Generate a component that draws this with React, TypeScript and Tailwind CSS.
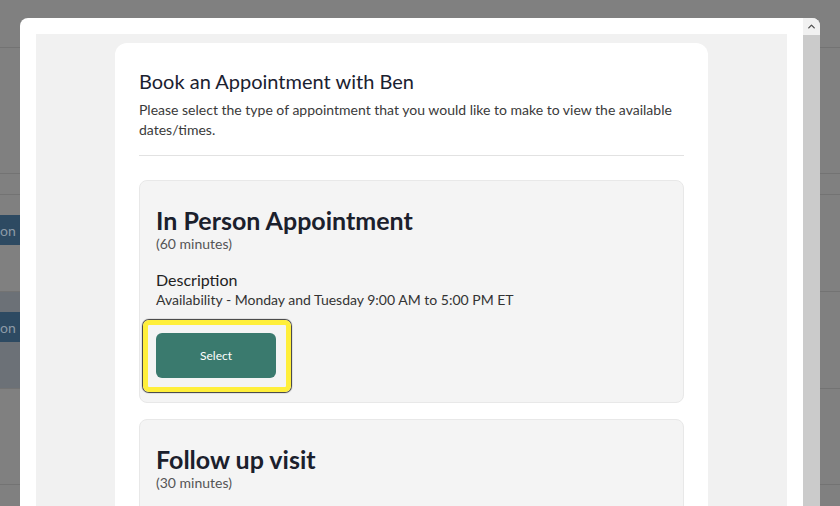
import { ChevronUp } from 'lucide-react'

function BackgroundPage() {
  return (
    <div className="flex h-full w-full flex-col bg-[#808080]">
      <div className="h-[48px] border-b border-[#737373]" />
      <div className="h-[126px] border-b border-[#737373]" />
      <div className="h-[21px] border-b border-[#737373]" />
      <div className="h-[97px] border-b border-[#737373]">
        <div className="mt-[20px] flex h-[30px] w-[60px] items-center bg-[#2d4a62] text-[14px] text-[#8c9aa6]">on</div>
      </div>
      <div className="h-[97px] border-b border-[#737373]">
        <div className="w-[60px] bg-[#6c7177]">
          <div className="h-[20px]" />
          <div className="flex h-[30px] items-center bg-[#2d4a62] text-[14px] text-[#8c9aa6]">on</div>
          <div className="h-[46px]" />
        </div>
      </div>
      <div className="h-[96px] border-b border-[#737373]" />
    </div>
  )
}

function AppointmentCard({
  title,
  minutes,
  description,
}: {
  title: string
  minutes: number
  description?: string
}) {
  return (
    <div className="rounded-lg border border-[#e8e8e8] bg-[#f4f4f4] px-4 pb-6 pt-[25px]">
      <h2 className="text-[25px] font-bold leading-[28px] text-[#1b202c]">{title}</h2>
      <p className="text-[14px] leading-5 text-[#555]">({minutes} minutes)</p>
      {description && (
        <>
          <h3 className="mt-4 text-[16px] leading-5 text-[#222]">Description</h3>
          <p className="text-[14px] leading-5 text-[#333]">{description}</p>
          {/* keyboard focus ring around the button */}
          <div className="-mb-[14px] -ml-[13px] mt-[10px] flex w-fit rounded-[6px] border-[5px] border-[#ffef3a] pb-[9px] pl-2 pr-[10px] pt-2 shadow-[0_0_1px_1px_#3a3a3a]">
            <button className="h-[45px] w-[120px] rounded-md bg-[#3a7a6e] text-[12px] text-white">Select</button>
          </div>
        </>
      )}
    </div>
  )
}

export default function App() {
  return (
    <div className="relative h-[506px] w-[840px] overflow-hidden font-['Lato',sans-serif]">
      <BackgroundPage />

      {/* Modal */}
      <div className="absolute bottom-0 left-[20px] right-[20px] top-[18px] flex overflow-hidden rounded-t-lg bg-white">
        <div className="flex-1 px-4 pt-4">
          <div className="h-full bg-[#f1f1f1] pt-[9px]">
            <div className="mx-auto w-[593px] rounded-xl bg-white p-6">
              <h1 className="text-[20px] leading-7 text-[#1a2130]">Book an Appointment with Ben</h1>
              <p className="mt-[5px] text-[14px] leading-5 text-[#3a3a3a]">
                Please select the type of appointment that you would like to make to view the available dates/times.
              </p>
              <hr className="mt-[15px] border-t border-[#e2e2e2]" />

              <div className="mt-6 flex flex-col gap-4">
                <AppointmentCard
                  title="In Person Appointment"
                  minutes={60}
                  description="Availability - Monday and Tuesday 9:00 AM to 5:00 PM ET"
                />
                <AppointmentCard title="Follow up visit" minutes={30} />
              </div>
            </div>
          </div>
        </div>

        {/* Scrollbar */}
        <div className="flex w-[17px] flex-col bg-[#cbcbcb]">
          <div className="flex h-[17px] items-center justify-center bg-[#f1f1f1] text-[#505050]">
            <ChevronUp size={11} strokeWidth={3} />
          </div>
        </div>
      </div>
    </div>
  )
}
